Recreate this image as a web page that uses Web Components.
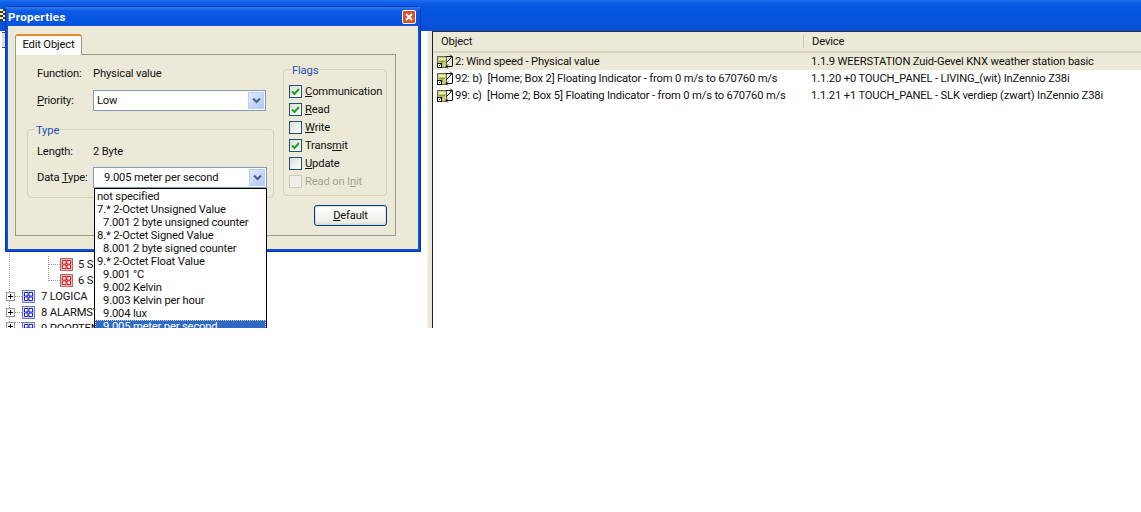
<!DOCTYPE html>
<html>
<head>
<meta charset="utf-8">
<title>Properties</title>
<style>
    html, body { margin: 0; padding: 0; background: #fff; }
    body { width: 1141px; height: 512px; overflow: hidden; font: 11.2px Roboto, "Liberation Sans", Arial, sans-serif; letter-spacing: -.16px; color: #111; }
</style>
</head>
<body>
<app-window>
    <tree-pane slot="tree"></tree-pane>
    <object-list slot="list"></object-list>
    <properties-dialog slot="dialog"></properties-dialog>
    <type-menu slot="dialog"></type-menu>
</app-window>

<script>
// Fenetre principale : bandeau bleu, arbre a gauche, liste a droite
class AppWindow extends HTMLElement {
    constructor() {
        super();
        this.attachShadow({ mode: 'open' });
        this.shadowRoot.innerHTML = `
            <style>
                :host { display: block; position: relative; height: 328px; overflow: hidden; }
                .title { height: 31px; padding-top: 9px; box-sizing: border-box; background: linear-gradient(#1f6ff0, #0a5ae6 12%, #0553dc 60%, #0a4fd6); }
                .title svg { display: block; }
                .panes { display: grid; grid-template-columns: 427px 5px 1fr; height: 297px; }
                .split { background: #ece9d8; border-left: 1px solid #f6f5ee; }
            </style>
            <div class="title">
                <svg width="5" height="12" viewBox="0 0 5 12">
                    <rect width="5" height="12" fill="#efe9b8"/>
                    <path d="M0 2h3v2H0zM0 6h3v2H0zM0 10h3v2H0zM3 0h2v2H3zM3 4h2v2H3zM3 8h2v2H3z" fill="#3a3a2a"/>
                </svg>
            </div>
            <div class="panes">
                <slot name="tree"></slot>
                <div class="split"></div>
                <slot name="list"></slot>
            </div>
            <slot name="dialog"></slot>
        `;
    }
}

// Arbre : seules les lignes sous le dialogue restent visibles
class TreePane extends HTMLElement {
    constructor() {
        super();
        this.attachShadow({ mode: 'open' });
        const red = this.icon('#f7b6b6', '#e01818', '#a86a6a');
        const blue = this.icon('#d5dcf8', '#1a22d8', '#7a7a9a');
        this.shadowRoot.innerHTML = `
            <style>
                :host {
                    display: flex; flex-direction: column; background-color: #fff; overflow: hidden;
                    background-image: repeating-linear-gradient(#a8a8a8 0 1px, transparent 1px 2px);
                    background-size: 1px 100%; background-position: 9px 0; background-repeat: no-repeat;
                }
                .stub { width: 3px; height: 14px; margin: 1px 0 auto 2px; background: #ddd; border: 1px solid #555; border-left: 0; }
                .row { display: flex; align-items: center; height: 16px; white-space: nowrap; flex: none; }
                .dots { border-top: 1px dotted #999; flex: none; }
                .sub { padding-left: 48px; background: repeating-linear-gradient(#a8a8a8 0 1px, transparent 1px 2px) 48px 0 / 1px 100% no-repeat; }
                .sub.end { background-size: 1px 50%; }
                .sub .dots { width: 12px; }
                .sub span:last-child { margin-left: 5px; }
                .main { padding-left: 6px; }
                .main .dots { width: 7px; }
                .main span:last-child { margin-left: 6px; }
                .last { height: 8px; align-items: flex-start; overflow: hidden; padding-top: 2px; box-sizing: border-box; }
                svg { flex: none; display: block; }
                .plus { background: #fff; }
            </style>
            <div class="stub"></div>
            <div class="row sub"><i class="dots"></i>${red}<span>5 S</span></div>
            <div class="row sub end"><i class="dots"></i>${red}<span>6 S</span></div>
            <div class="row main">${this.plus()}<i class="dots"></i>${blue}<span>7 LOGICA</span></div>
            <div class="row main">${this.plus()}<i class="dots"></i>${blue}<span>8 ALARMSY</span></div>
            <div class="row main last">${this.plus()}<i class="dots"></i>${blue}<span>9 POORTEN</span></div>
        `;
    }
    plus() {
        return `<svg class="plus" width="9" height="9" viewBox="0 0 9 9"><rect x=".5" y=".5" width="8" height="8" fill="#fff" stroke="#8a9aa8"/><path d="M2 4.5h5M4.5 2v5" stroke="#000"/></svg>`;
    }
    icon(fill, line, edge) {
        return `<svg width="13" height="13" viewBox="0 0 13 13">
            <rect x=".5" y=".5" width="12" height="12" fill="${fill}" stroke="${edge}"/>
            <path d="M2.5 2.5h3.5v3.5h-3.5zM7 2.5h3.5v3.5h-3.5zM2.5 7h3.5v3.5h-3.5zM7 7h3.5v3.5h-3.5z" fill="#fff" stroke="${line}"/>
        </svg>`;
    }
}

// Liste des objets de groupe
class ObjectList extends HTMLElement {
    constructor() {
        super();
        this.attachShadow({ mode: 'open' });
        const rows = [
            ['2: Wind speed - Physical value', '1.1.9 WEERSTATION Zuid-Gevel KNX weather station basic', true],
            ['92: b)  [Home; Box 2] Floating Indicator - from 0 m/s to 670760 m/s', '1.1.20 +0 TOUCH_PANEL - LIVING_(wit) InZennio Z38i', false],
            ['99: c)  [Home 2; Box 5] Floating Indicator - from 0 m/s to 670760 m/s', '1.1.21 +1 TOUCH_PANEL - SLK verdiep (zwart) InZennio Z38i', false],
        ];
        this.shadowRoot.innerHTML = `
            <style>
                :host { display: block; background: #fff; border-left: 1px solid #222; border-top: 1px solid #333; overflow: hidden; }
                .head, .row { display: grid; grid-template-columns: 370px 1fr; }
                .head { height: 19px; align-items: center; background: #ece9d8; border-bottom: 2px solid #d8d4c2; }
                .head span { padding-left: 8px; }
                .head span + span { border-left: 1px solid #c9c5b2; }
                .row { height: 17px; align-items: center; }
                .row.sel { background: #ece9d8; }
                .obj { display: flex; align-items: center; padding-left: 4px; white-space: pre; }
                .dev { padding-left: 8px; white-space: pre; }
                svg { display: block; flex: none; }
            </style>
            <div class="head"><span>Object</span><span>Device</span></div>
            ${rows.map(r => `
                <div class="row ${r[2] ? 'sel' : ''}">
                    <div class="obj">${this.linkIcon()}<span>${r[0]}</span></div>
                    <div class="dev">${r[1]}</div>
                </div>`).join('')}
        `;
    }
    linkIcon() {
        return `<svg width="18" height="16" viewBox="0 0 18 16">
            <rect x=".5" y="2.5" width="9" height="11" fill="#c9cc6e" stroke="#666"/>
            <rect x="2" y="4" width="6" height="2" fill="#eef0b4"/>
            <path d="M2 7.5h6M5 6.5v4" stroke="#8f9440"/>
            <rect x=".5" y="9.5" width="4" height="4" fill="#fff" stroke="#111"/>
            <path d="M2 12l1.5-1.5" stroke="#111"/>
            <path d="M9 2.5h6M13 .5l2 2-2 2M15.5 2.5v10M15 12.5H9M11 10.5l-2 2 2 2M9.5 8.5l5-5" fill="none" stroke="#111"/>
        </svg>`;
    }
}

// Case a cocher XP
class XpCheck extends HTMLElement {
    constructor() {
        super();
        this.attachShadow({ mode: 'open' });
        const disabled = this.hasAttribute('disabled');
        const checked = this.hasAttribute('checked');
        this.shadowRoot.innerHTML = `
            <style>
                :host { display: flex; align-items: center; gap: 3px; height: 18px; white-space: nowrap; color: ${disabled ? '#a5a294' : 'inherit'}; }
                .box { width: 11px; height: 11px; border: 1px solid ${disabled ? '#cac8bb' : '#1c5180'}; background: ${disabled ? '#f2f0e6' : 'linear-gradient(135deg, #dcdcd7, #fff)'}; flex: none; }
                svg { display: block; }
            </style>
            <div class="box">${checked ? '<svg width="11" height="11" viewBox="0 0 11 11"><path d="M2 5.5l2.5 2.5L9 3" fill="none" stroke="#21a121" stroke-width="2"/></svg>' : ''}</div>
            <span><slot></slot></span>
        `;
    }
}

// Liste deroulante fermee
class XpCombo extends HTMLElement {
    constructor() {
        super();
        this.attachShadow({ mode: 'open' });
        this.shadowRoot.innerHTML = `
            <style>
                :host { display: flex; align-items: center; justify-content: space-between; box-sizing: border-box; height: 21px; background: #fff; border: 1px solid #7f9db9; padding: 1px; }
                .val { padding-left: var(--pad, 2px); }
                .btn { width: 16px; height: 17px; background: linear-gradient(135deg, #e1eafe, #aec8f7); border: 1px solid #bcd0f5; box-sizing: border-box; display: flex; align-items: center; justify-content: center; }
                svg { display: block; }
            </style>
            <span class="val"><slot></slot></span>
            <div class="btn"><svg width="9" height="7" viewBox="0 0 9 7"><path d="M1 1.5l3.5 3.5L8 1.5" fill="none" stroke="#4d6185" stroke-width="2"/></svg></div>
        `;
    }
}

// Cadre avec legende bleue
class XpGroup extends HTMLElement {
    constructor() {
        super();
        this.attachShadow({ mode: 'open' });
        this.shadowRoot.innerHTML = `
            <style>
                :host { display: block; position: relative; box-sizing: border-box; border: 1px solid #d0d0bf; border-radius: 4px; }
                .legend { position: absolute; top: -6px; left: 7px; padding: 0 1px; background: #ece9d8; color: #1f4fb0; line-height: 14px; }
            </style>
            <div class="legend">${this.getAttribute('label')}</div>
            <slot></slot>
        `;
    }
}

// Menu ouvert de Data Type, coupe par le bas de la fenetre
class TypeMenu extends HTMLElement {
    constructor() {
        super();
        this.attachShadow({ mode: 'open' });
        const items = [
            ['not specified', 0], ['7.* 2-Octet Unsigned Value', 0], ['7.001 2 byte unsigned counter', 1],
            ['8.* 2-Octet Signed Value', 0], ['8.001 2 byte signed counter', 1], ['9.* 2-Octet Float Value', 0],
            ['9.001 °C', 1], ['9.002 Kelvin', 1], ['9.003 Kelvin per hour', 1], ['9.004 lux', 1],
            ['9.005 meter per second', 1, 1],
        ];
        this.shadowRoot.innerHTML = `
            <style>
                :host { display: block; position: absolute; left: 94px; top: 188px; width: 173px; height: 150px; box-sizing: border-box; background: #fff; border: 1px solid #000; padding-top: 1px; overflow: hidden; }
                div { height: 13px; line-height: 13px; padding-left: 2px; white-space: nowrap; }
                .in { padding-left: 8px; }
                .sel { background: #316ac5; color: #fff; outline: 1px dotted #c9d6ee; outline-offset: -1px; }
            </style>
            ${items.map(i => `<div class="${i[1] ? 'in' : ''} ${i[2] ? 'sel' : ''}">${i[0]}</div>`).join('')}
        `;
    }
}

// Dialogue Properties, fenetre posee au-dessus de l'application
class PropertiesDialog extends HTMLElement {
    constructor() {
        super();
        this.attachShadow({ mode: 'open' });
        this.shadowRoot.innerHTML = `
            <style>
                :host { display: block; position: absolute; left: 5px; top: 6px; width: 416px; height: 246px; box-sizing: border-box; background: #0a50d8; border: 1px solid #0831a8; border-radius: 5px 5px 0 0; padding: 0 2px 3px; }
                .bar { height: 19px; display: flex; align-items: center; justify-content: space-between; background: linear-gradient(#2f80f4, #0a5ae6 22%, #0553dc); margin: 0 -2px; padding: 0 2px; }
                .bar b { color: #fff; font-size: 11.5px; letter-spacing: .35px; }
                .close { width: 14px; height: 14px; margin-right: 2px; box-sizing: border-box; border: 1px solid #fff; border-radius: 2px; background: #d8532c; display: flex; align-items: center; justify-content: center; }
                svg { display: block; }
                .body { height: 223px; box-sizing: border-box; background: #ece9d8; padding: 8px 22px 0 7px; }
                .tab { width: 67px; height: 21px; padding-bottom: 2px; box-sizing: border-box; background: #fcfcfa; border: 1px solid #9a9a8c; border-top: 2px solid #e68b2c; border-bottom: 0; border-radius: 3px 3px 0 0; display: flex; align-items: center; justify-content: center; position: relative; z-index: 1; margin-bottom: -1px; }
                .page { height: 182px; box-sizing: border-box; border: 1px solid #9a9a8c; background: #ece9d8; padding: 12px 8px 0 11px; display: grid; grid-template-columns: 247px 104px; column-gap: 9px; }
                .left { display: flex; flex-direction: column; }
                .line { display: grid; grid-template-columns: 56px 1fr; align-items: center; padding-left: 10px; height: 13px; }
                .prio { margin-top: 10px; height: 21px; padding-right: 8px; }
                .type { margin-top: 18px; height: 69px; padding-top: 15px; }
                .type .line { padding-left: 9px; padding-right: 6px; }
                .type .line + .line { margin-top: 9px; height: 21px; }
                .right { display: flex; flex-direction: column; align-items: flex-end; padding-top: 2px; }
                .flags { width: 104px; height: 127px; padding: 12px 0 0 5px; }
                .btn { margin-top: 9px; width: 73px; height: 21px; box-sizing: border-box; border: 1px solid #003c74; border-radius: 3px; background: linear-gradient(#fff, #f0efe6 85%, #d6d0c5); box-shadow: inset 0 0 0 1px #cfe0f8; display: flex; align-items: center; justify-content: center; }
            </style>
            <div class="bar">
                <b>Properties</b>
                <div class="close"><svg width="8" height="8" viewBox="0 0 8 8"><path d="M1 1l6 6M7 1l-6 6" stroke="#fff" stroke-width="2"/></svg></div>
            </div>
            <div class="body">
                <div class="tab">Edit Object</div>
                <div class="page">
                    <div class="left">
                        <div class="line"><span>Function:</span><span>Physical value</span></div>
                        <div class="line prio"><span><u>P</u>riority:</span><xp-combo>Low</xp-combo></div>
                        <xp-group class="type" label="Type">
                            <div class="line"><span>Length:</span><span>2 Byte</span></div>
                            <div class="line"><span>Data <u>T</u>ype:</span><xp-combo style="--pad:9px">9.005 meter per second</xp-combo></div>
                        </xp-group>
                    </div>
                    <div class="right">
                        <xp-group class="flags" label="Flags">
                            <xp-check checked><u>C</u>ommunication</xp-check>
                            <xp-check checked><u>R</u>ead</xp-check>
                            <xp-check><u>W</u>rite</xp-check>
                            <xp-check checked>Trans<u>m</u>it</xp-check>
                            <xp-check><u>U</u>pdate</xp-check>
                            <xp-check disabled>Read on I<u>n</u>it</xp-check>
                        </xp-group>
                        <div class="btn"><span><u>D</u>efault</span></div>
                    </div>
                </div>
            </div>
        `;
    }
}

customElements.define('xp-check', XpCheck);
customElements.define('xp-combo', XpCombo);
customElements.define('xp-group', XpGroup);
customElements.define('tree-pane', TreePane);
customElements.define('object-list', ObjectList);
customElements.define('type-menu', TypeMenu);
customElements.define('properties-dialog', PropertiesDialog);
customElements.define('app-window', AppWindow);
</script>
</body>
</html>
